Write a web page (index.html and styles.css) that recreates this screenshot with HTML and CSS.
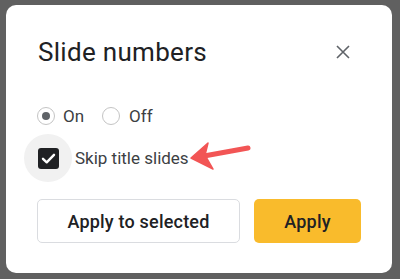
FILE: index.html
```html
<!DOCTYPE html>
<html>
<head>
<meta charset="utf-8">
<link rel="stylesheet" href="styles.css">
</head>
<body>
<div class="dialog">
  <div class="header">
    <h1 class="title">Slide numbers</h1>
    <button class="close" aria-label="Close">
      <svg width="14" height="14" viewBox="0 0 14 14"><path d="M1 1 L13 13 M13 1 L1 13" stroke="#5f6368" stroke-width="1.6" fill="none"/></svg>
    </button>
  </div>
  <div class="radios">
    <span class="radio checked"></span><span class="rlabel">On</span>
    <span class="radio off"></span><span class="rlabel">Off</span>
  </div>
  <div class="checkrow">
    <span class="ripple"><span class="checkbox">
      <svg width="21" height="21" viewBox="0 0 21 21"><path d="M5 10.8 L8.7 14.3 L16 6.8" stroke="#fff" stroke-width="2.4" fill="none" stroke-linecap="round" stroke-linejoin="round"/></svg>
    </span></span>
    <span class="clabel">Skip title slides</span>
  </div>
  <div class="buttons">
    <button class="btn outline">Apply to selected</button>
    <button class="btn primary">Apply</button>
  </div>
  <svg class="arrow" width="80" height="45" viewBox="0 0 80 45">
    <path d="M68 13 L24 21" stroke="#f25555" stroke-width="5" stroke-linecap="round" fill="none"/>
    <polygon points="11,23 28,8 25,20 33,34" fill="#f25555" stroke="#f25555" stroke-width="1.5" stroke-linejoin="round"/>
  </svg>
</div>
</body>
</html>
```
FILE: styles.css
```css
html, body {
  margin: 0;
  padding: 0;
}
body {
  background: #606060;
  width: 400px;
  height: 279px;
  overflow: hidden;
  font-family: Roboto, "Liberation Sans", sans-serif;
}
.dialog {
  position: relative;
  margin: 5px 8px 6px 6px;
  height: 268px;
  box-sizing: border-box;
  background: #fff;
  border-radius: 10px;
  padding: 29px 31px 0 31px;
}
.header {
  display: flex;
  justify-content: space-between;
  align-items: center;
  height: 36px;
}
.title {
  margin: 0 0 0 1px;
  font-weight: 400;
  font-size: 26px;
  line-height: 32px;
  letter-spacing: 0.3px;
  color: #202124;
}
.close {
  width: 36px;
  height: 36px;
  padding: 0;
  border: none;
  background: none;
  display: flex;
  align-items: center;
  justify-content: center;
}
.radios {
  margin-top: 34px;
  display: flex;
  align-items: center;
  height: 24px;
}
.radio {
  width: 18px;
  height: 18px;
  box-sizing: border-box;
  border: 1.5px solid #c4c4c4;
  border-radius: 50%;
  display: flex;
  align-items: center;
  justify-content: center;
}
.radio.checked::after {
  content: "";
  width: 8px;
  height: 8px;
  border-radius: 50%;
  background: #5f6368;
}
.radio.off {
  margin-left: 18px;
}
.rlabel {
  margin-left: 8px;
  font-size: 17px;
  line-height: 24px;
  color: #3c4043;
}
.radio.off + .rlabel {
  margin-left: 9px;
}
.checkrow {
  margin-top: 6px;
  display: flex;
  align-items: center;
}
.ripple {
  width: 48px;
  height: 48px;
  margin-left: -13px;
  border-radius: 50%;
  background: #f1f1f1;
  display: flex;
  align-items: center;
  justify-content: center;
}
.checkbox {
  width: 21px;
  height: 21px;
  border-radius: 3px;
  background: #202124;
  display: flex;
}
.clabel {
  margin-left: 3px;
  font-size: 17px;
  line-height: 24px;
  color: #3c4043;
}
.buttons {
  margin-top: 17px;
  display: flex;
  gap: 14px;
}
.btn {
  height: 44px;
  border-radius: 5px;
  font-family: Roboto, "Liberation Sans", sans-serif;
  font-weight: 500;
  font-size: 18px;
  letter-spacing: 0.2px;
  color: #202124;
  padding: 0;
}
.outline {
  flex: 0 0 203px;
  background: #fff;
  border: 1px solid #dadce0;
}
.primary {
  flex: 1;
  background: #f9bb2c;
  border: none;
}
.arrow {
  position: absolute;
  left: 174px;
  top: 130px;
}
```
